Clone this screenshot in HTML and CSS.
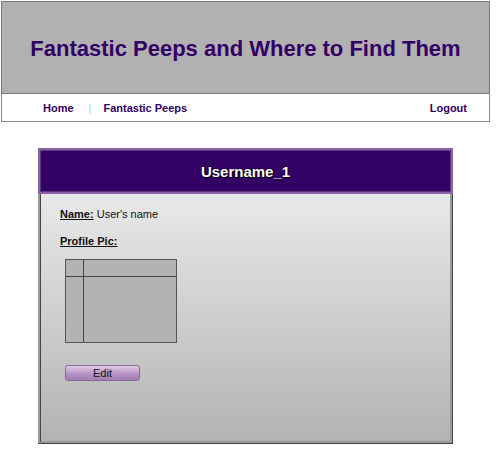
FILE: index.html
```html
<!DOCTYPE html>
<html>
<head>
<meta charset="utf-8">
<link rel="stylesheet" href="styles.css">
</head>
<body>
<div class="page">
  <header class="banner">
    <h1 class="title">Fantastic Peeps and Where to Find Them</h1>
  </header>
  <nav class="nav">
    <a class="nav-link">Home</a>
    <span class="sep">|</span>
    <a class="nav-link">Fantastic Peeps</a>
    <a class="nav-link logout">Logout</a>
  </nav>
  <section class="card">
    <div class="card-head">Username_1</div>
    <div class="card-body">
      <p class="field"><span class="label">Name:</span> User's name</p>
      <p class="field pic-label"><span class="label">Profile Pic:</span></p>
      <div class="pic">
        <div class="c1"></div><div class="c2"></div>
        <div class="c3"></div><div class="c4"></div>
      </div>
      <button class="edit">Edit</button>
    </div>
  </section>
</div>
</body>
</html>
```
FILE: styles.css
```css
html, body { margin: 0; padding: 0; background: #fff; }
body { font-family: "Liberation Sans", Arial, sans-serif; }
.page { padding: 1px 0 0 1px; width: 489px; }
.banner {
  height: 91px;
  background: #b1b1b1;
  border: 1px solid #7a7a7a;
  display: flex; align-items: center; justify-content: center;
}
.title {
  margin: 0; font-size: 22px; font-weight: bold; color: #330066;
  padding-top: 2px;
}
.nav {
  height: 27px;
  border: 1px solid #8a8a8a; border-top: none;
  display: flex; align-items: center;
  padding: 0 22px 0 41px;
  font-size: 11px; font-weight: bold; color: #330066;
}
.nav-link { color: #330066; }
.sep { color: #a8d4d0; font-weight: normal; margin: 0 12px 0 15px; }
.logout { margin-left: auto; }
.card { width: 415px; margin: 26px 0 0 37px; }
.card-head {
  height: 42px;
  background: #330066;
  border: 2px solid #8a62a8;
  box-shadow: inset 0 0 0 1px #5a3a7a;
  color: #fff; font-size: 15px; font-weight: bold;
  display: flex; align-items: center; justify-content: center;
  text-shadow: 0 0 2px #000, 1px 1px 1px #000;
}
.card-body {
  height: 233px;
  border: 3px ridge #9a9a9a; border-top: none;
  background: linear-gradient(#e9e9e9, #b3b3b3);
  padding: 14px 0 0 19px;
}
.field { margin: 0; font-size: 11px; color: #111; }
.label { font-weight: bold; text-decoration: underline; }
.pic-label { margin-top: 15px; }
.pic {
  margin: 12px 0 0 5px;
  width: 110px; height: 82px;
  border: 1px solid #555;
  background: #b3b3b3;
  display: grid; grid-template-columns: 18px 1fr; grid-template-rows: 17px 1fr;
}
.c1 { border-right: 1px solid #444; border-bottom: 1px solid #444; }
.c2 { border-bottom: 1px solid #444; }
.c3 { border-right: 1px solid #444; }
.edit {
  display: block; margin: 22px 0 0 5px;
  width: 75px; height: 16px; padding: 0;
  border: 1px solid #8a6a9a; border-radius: 3px;
  background: linear-gradient(#e2cbe8, #b48fc2 60%, #a27fb2);
  font-family: "Liberation Sans", Arial, sans-serif; font-size: 11px; color: #111;
}
```
